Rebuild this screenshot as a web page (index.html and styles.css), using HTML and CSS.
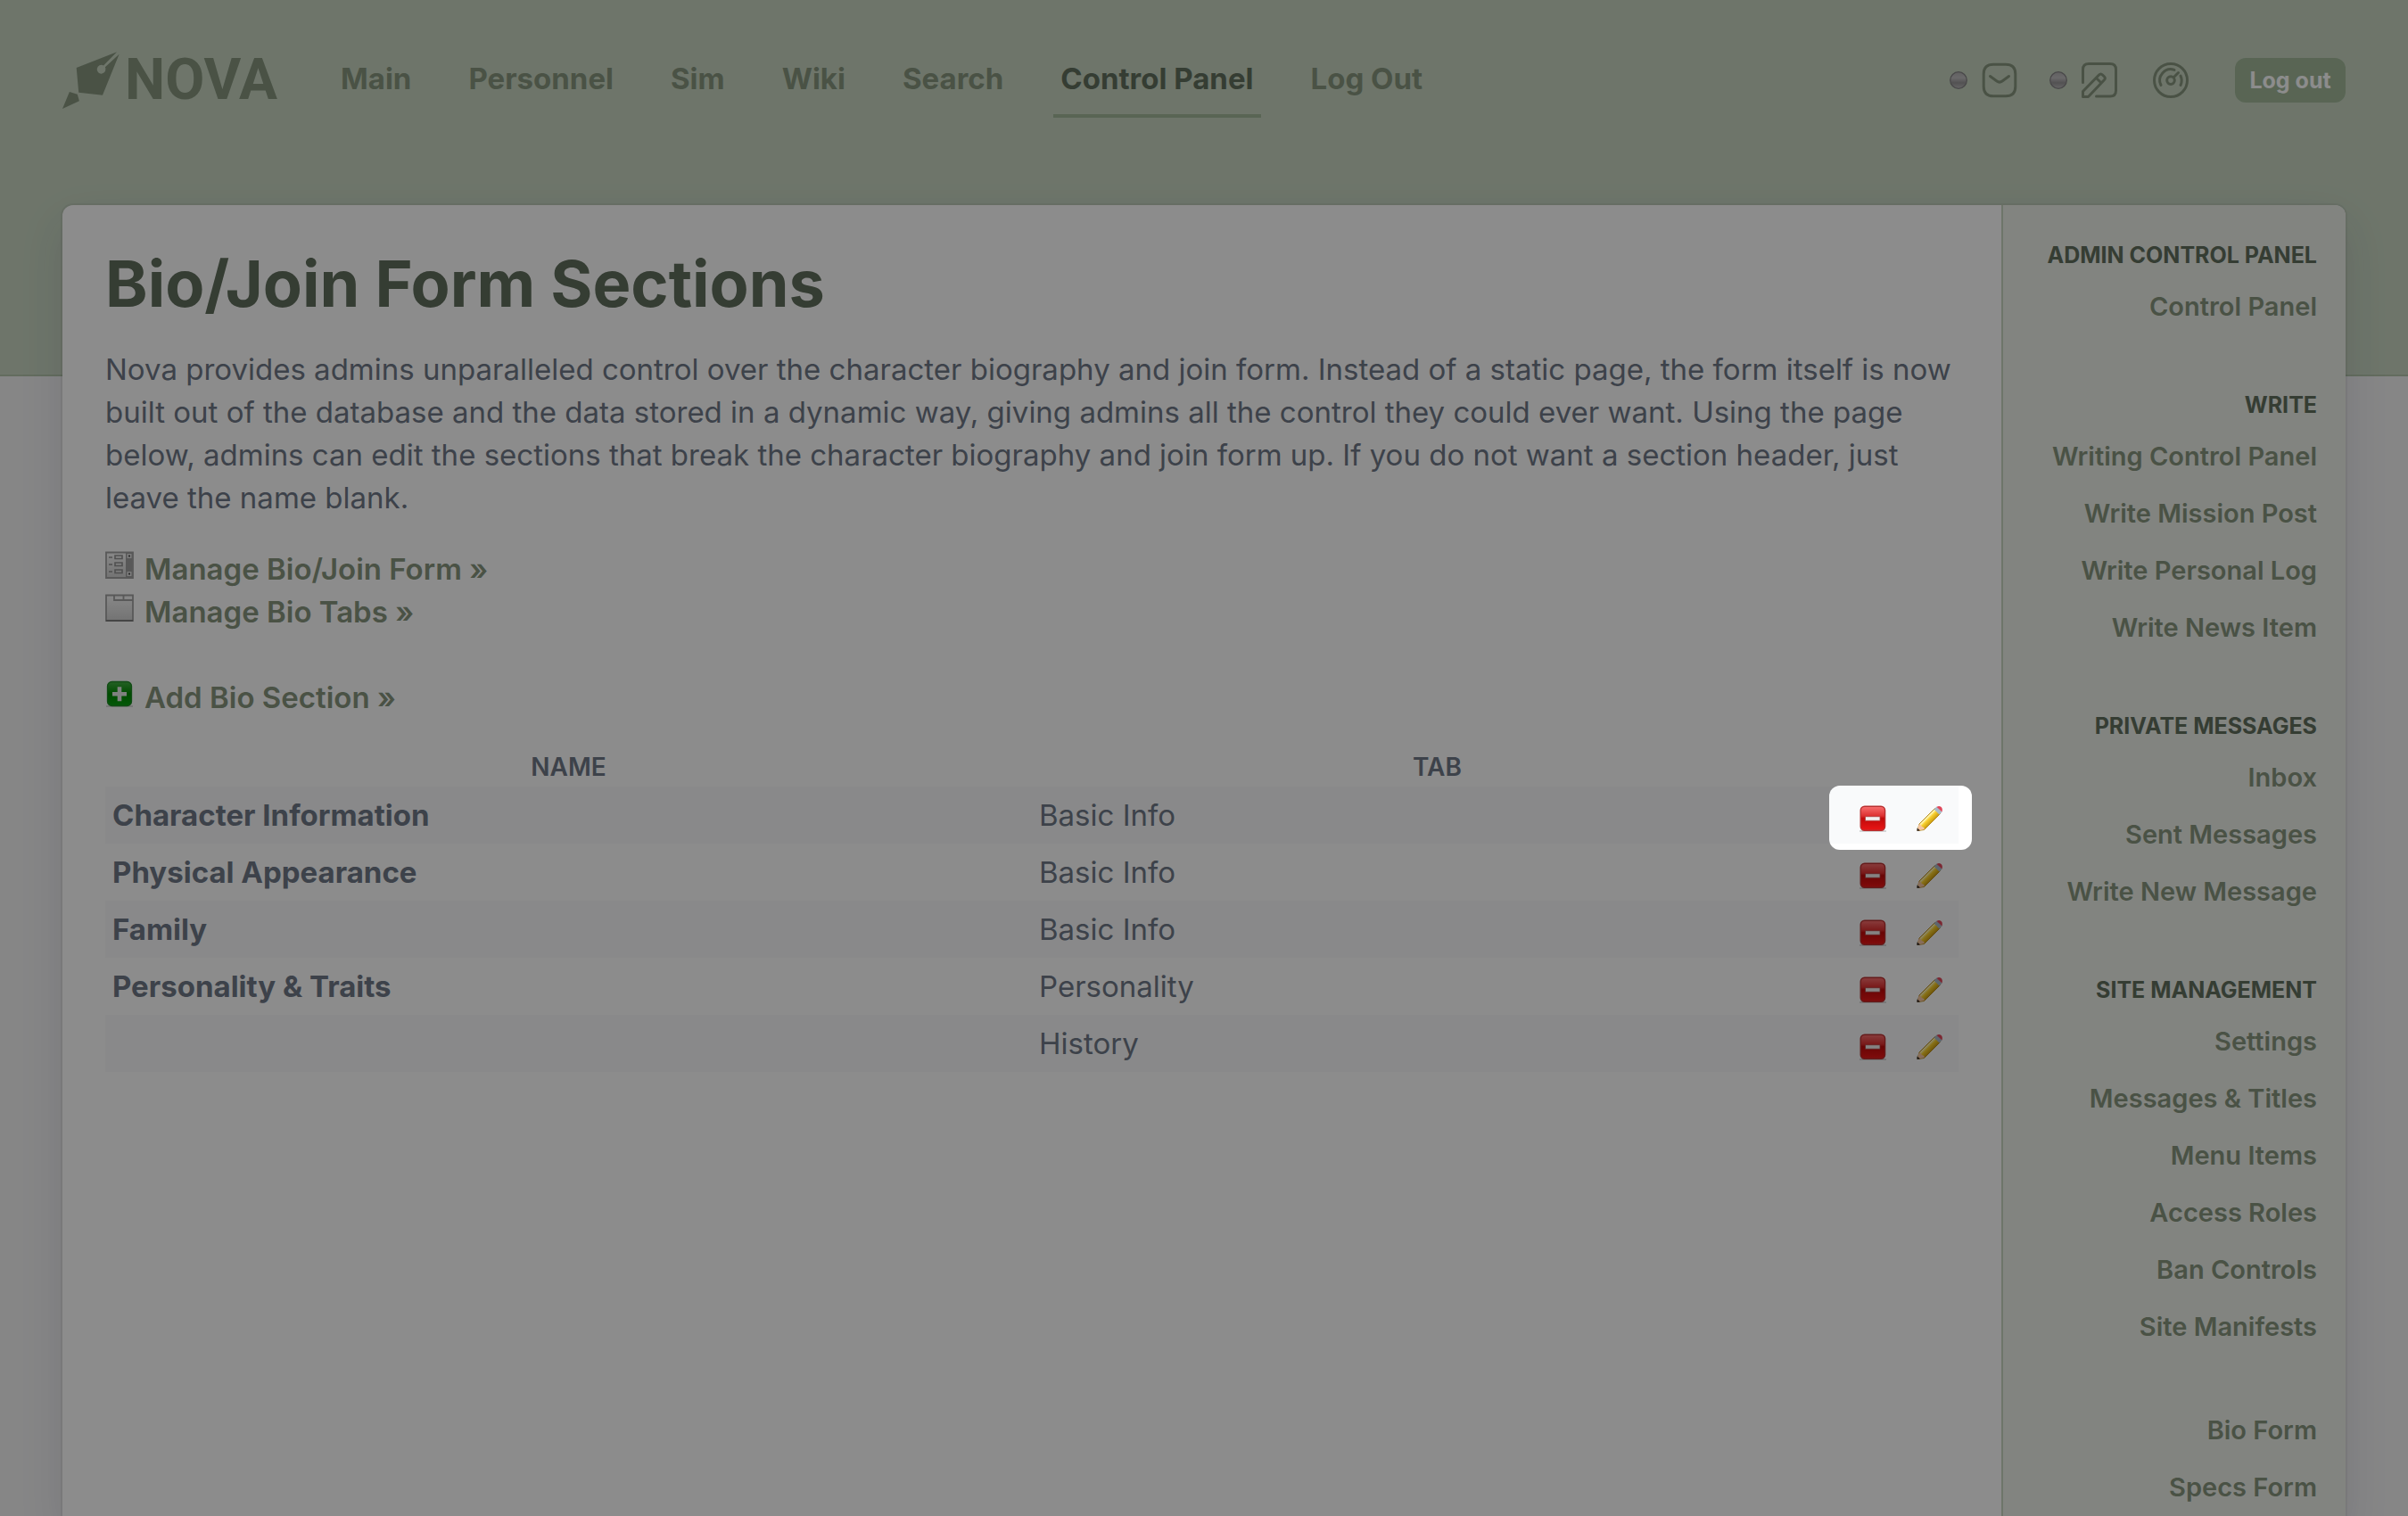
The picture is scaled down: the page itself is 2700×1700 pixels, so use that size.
FILE: index.html
```html
<!DOCTYPE html>
<html lang="en">
<head>
<meta charset="utf-8">
<meta name="viewport" content="width=device-width, initial-scale=1">
<title>Bio/Join Form Sections</title>
<link rel="stylesheet" href="styles.css">
</head>
<body>
<svg class="defs" aria-hidden="true">
  <defs>
    <linearGradient id="red" x1="0" y1="0" x2="0" y2="1"><stop offset="0" stop-color="#f87070"/><stop offset=".4" stop-color="#dd3030"/><stop offset=".5" stop-color="#c00a0a"/><stop offset="1" stop-color="#ea1616"/></linearGradient>
    <linearGradient id="green" x1="0" y1="0" x2="0" y2="1"><stop offset="0" stop-color="#45b045"/><stop offset=".5" stop-color="#008a00"/><stop offset="1" stop-color="#08a010"/></linearGradient>
    <linearGradient id="grey" x1="0" y1="0" x2="0" y2="1"><stop offset="0" stop-color="#f8f8f8"/><stop offset="1" stop-color="#d2d2d2"/></linearGradient>
    <linearGradient id="yellow" gradientUnits="userSpaceOnUse" x1="10" y1="10" x2="20" y2="20"><stop offset="0" stop-color="#f4d860"/><stop offset=".35" stop-color="#fff3a8"/><stop offset=".5" stop-color="#f8d030"/><stop offset="1" stop-color="#b88500"/></linearGradient>
    <linearGradient id="ball" x1="0" y1="0" x2="0" y2="1"><stop offset="0" stop-color="#b0aeb0"/><stop offset=".35" stop-color="#c2c0c2"/><stop offset=".65" stop-color="#989698"/><stop offset="1" stop-color="#bab8ba"/></linearGradient>
    <symbol id="remove" viewBox="0 0 32 32">
      <path d="M1 28h30v2H1z" fill="#000" opacity=".14"/>
      <rect x="2.200" y="1.200" width="27.400" height="27" rx="4.500" fill="url(#red)" stroke="#b83030" stroke-width="1.400"/>
      <path d="M7.500 12.700h16.500v4.600H7.500z" fill="#f2efef" stroke="#b04040" stroke-width=".8"/>
    </symbol>
    <symbol id="pencil" viewBox="0 0 32 32">
      <path d="M2 28.500L4 21 21.500 3.500 27.500 9.500 9.500 27.500Z" fill="url(#yellow)" stroke="#b48a24" stroke-width="1"/>
      <path d="M2 28.500L3.500 21.500 5.500 22 7 24 9.300 25 9.800 27Z" fill="#f6c6a4"/>
      <path d="M1.500 29V25.500L5 28.200Z" fill="#2c2220"/>
      <path d="M20.500 4.500L23.500 1.500 29.500 7.500 26.500 10.500Z" fill="#a9bac8"/>
      <path d="M23.500 2Q26 0 28.300 1.700T29.500 7.500Z" fill="#e0475a"/>
    </symbol>
    <symbol id="dot" viewBox="0 0 20 20">
      <circle cx="10" cy="10" r="9.300" fill="url(#ball)" stroke="#858385" stroke-width="1.300"/>
    </symbol>
  </defs>
</svg>

<header class="topbar">
  <a class="logo" href="#" aria-label="Nova home">
    <svg class="logo-mark" viewBox="0 0 64 64" aria-hidden="true">
      <path fill="currentColor" d="M61 .3L15.700 18 18.200 45.700 45 48.700 63.600 2.700 47.900 17.350A4.900 4.900 0 1 1 46.060 15.500Z"/>
      <path fill="currentColor" d="M7.900 45L16.800 47.700 18.900 55.300 0 64Z"/>
    </svg>
    <span class="logo-word">NOVA</span>
  </a>
  <nav class="menu" aria-label="Main menu">
    <a href="#">Main</a>
    <a href="#">Personnel</a>
    <a href="#">Sim</a>
    <a href="#">Wiki</a>
    <a href="#">Search</a>
    <a class="active" href="#" aria-current="page">Control Panel</a>
    <a href="#">Log Out</a>
  </nav>
  <div class="tools">
    <a class="tool" href="#" aria-label="Inbox">
      <svg class="dot" aria-hidden="true"><use href="#dot"/></svg>
      <svg class="glyph" viewBox="0 0 40 40" aria-hidden="true"><path d="M13 2.200H27Q37.800 2.200 37.800 13V27Q37.800 37.800 27 37.800H13Q2.200 37.800 2.200 27V13Q2.200 2.200 13 2.200ZM9.500 15.500L17 21Q20 23.200 23 21L30.500 15.500"/></svg>
    </a>
    <a class="tool" href="#" aria-label="Writing">
      <svg class="dot" aria-hidden="true"><use href="#dot"/></svg>
      <svg class="glyph" viewBox="0 0 40 40" aria-hidden="true"><path d="M1.500 22.500V8Q1.500 1.500 8 1.500H32Q38.500 1.500 38.500 8V31.500Q38.500 38 32 38H16.500M1.500 38.500V32.500L19.500 14Q21.500 12 23.500 14L25.300 15.800Q27.300 17.800 25.300 19.800L7.500 38.500ZM16.500 17.500L21.800 22.800"/></svg>
    </a>
    <a class="tool gauge" href="#" aria-label="Control panel">
      <svg class="glyph" viewBox="0 0 40 40" aria-hidden="true"><path d="M20 1.500A18.500 18.500 0 1 1 20 38.500 18.500 18.500 0 1 1 20 1.500ZM20 15.800A4.300 4.300 0 1 1 20 24.400 4.300 4.300 0 1 1 20 15.800ZM23.200 16.800L28.500 11.500M9 25.500A12.300 12.300 0 0 1 24 8.400M31 15A12.300 12.300 0 0 1 31 25.500"/></svg>
    </a>
    <button class="logout" type="button">Log out</button>
  </div>
</header>

<div class="card">
  <main class="content">
    <h1>Bio/Join Form Sections</h1>
    <p class="intro">Nova provides admins unparalleled control over the character biography and join form. Instead of a static page, the form itself is now built out of the database and the data stored in a dynamic way, giving admins all the control they could ever want. Using the page below, admins can edit the sections that break the character biography and join form up. If you do not want a section header, just leave the name blank.</p>
    <ul class="actions">
      <li><a href="#">
        <svg viewBox="0 0 32 32" aria-hidden="true"><path d="M1 1.500H31V30H1Z" fill="url(#grey)" stroke="#a2a2a2" stroke-width="1.800"/><path d="M23 2h7.500v28H23z" fill="#a0a0a0"/><path d="M24.500 3h5v5h-5zM24.500 23h5v5h-5z" fill="#e4e4e4"/><path d="M26 4.500h2v2h-2zM26 24.500h2v2h-2z" fill="#555"/><path d="M4 7h4M4 15h4M4 23h4M11 5h8v3.500h-8zM11 13h8v3.500h-8zM11 21h8v3.500h-8z" fill="none" stroke="#939393" stroke-width="1.600"/></svg>
        Manage Bio/Join Form »</a></li>
      <li><a href="#">
        <svg viewBox="0 0 32 32" aria-hidden="true"><path d="M1 1.500H31V30H1Z" fill="url(#grey)" stroke="#a2a2a2" stroke-width="1.800"/><path d="M10 1.500V7H31M20.500 1.500V7" fill="none" stroke="#a2a2a2" stroke-width="1.800"/><path d="M1 30H31" stroke="#777" stroke-width="1.600"/></svg>
        Manage Bio Tabs »</a></li>
      <li class="add"><a href="#">
        <svg viewBox="0 0 32 32" aria-hidden="true"><path d="M1 29h30v2H1z" fill="#000" opacity=".14"/><rect x="2.500" y="2.500" width="27" height="27" rx="5" fill="url(#green)" stroke="#228a28" stroke-width="1.300"/><path d="M16 8.200V24.200M8 16.200H24" stroke="#e8ece8" stroke-width="4.600"/></svg>
        Add Bio Section »</a></li>
    </ul>
    <table class="sections">
      <thead>
        <tr><th class="col-name" scope="col">NAME</th><th scope="col">TAB</th><td class="col-tools"></td></tr>
      </thead>
      <tbody>
        <tr>
          <th scope="row">Character Information</th><td>Basic Info</td>
          <td class="spot-cell"><span class="row-tools"><a href="#" aria-label="Delete Character Information"><svg><use href="#remove"/></svg></a><a href="#" aria-label="Edit Character Information"><svg><use href="#pencil"/></svg></a></span><span class="spotlight"></span></td>
        </tr>
        <tr>
          <th scope="row">Physical Appearance</th><td>Basic Info</td>
          <td><span class="row-tools"><a href="#" aria-label="Delete Physical Appearance"><svg><use href="#remove"/></svg></a><a href="#" aria-label="Edit Physical Appearance"><svg><use href="#pencil"/></svg></a></span></td>
        </tr>
        <tr>
          <th scope="row">Family</th><td>Basic Info</td>
          <td><span class="row-tools"><a href="#" aria-label="Delete Family"><svg><use href="#remove"/></svg></a><a href="#" aria-label="Edit Family"><svg><use href="#pencil"/></svg></a></span></td>
        </tr>
        <tr>
          <th scope="row">Personality &amp; Traits</th><td>Personality</td>
          <td><span class="row-tools"><a href="#" aria-label="Delete Personality and Traits"><svg><use href="#remove"/></svg></a><a href="#" aria-label="Edit Personality and Traits"><svg><use href="#pencil"/></svg></a></span></td>
        </tr>
        <tr>
          <th scope="row"></th><td>History</td>
          <td><span class="row-tools"><a href="#" aria-label="Delete History section"><svg><use href="#remove"/></svg></a><a href="#" aria-label="Edit History section"><svg><use href="#pencil"/></svg></a></span></td>
        </tr>
      </tbody>
    </table>
  </main>
  <aside class="sidebar">
    <section>
      <h2>ADMIN CONTROL PANEL</h2>
      <ul><li><a href="#">Control Panel</a></li></ul>
    </section>
    <section>
      <h2>WRITE</h2>
      <ul>
        <li><a href="#">Writing Control Panel</a></li>
        <li><a href="#">Write Mission Post</a></li>
        <li><a href="#">Write Personal Log</a></li>
        <li><a href="#">Write News Item</a></li>
      </ul>
    </section>
    <section>
      <h2>PRIVATE MESSAGES</h2>
      <ul>
        <li><a href="#">Inbox</a></li>
        <li><a href="#">Sent Messages</a></li>
        <li><a href="#">Write New Message</a></li>
      </ul>
    </section>
    <section>
      <h2>SITE MANAGEMENT</h2>
      <ul>
        <li><a href="#">Settings</a></li>
        <li><a href="#">Messages &amp; Titles</a></li>
        <li><a href="#">Menu Items</a></li>
        <li><a href="#">Access Roles</a></li>
        <li><a href="#">Ban Controls</a></li>
        <li><a href="#">Site Manifests</a></li>
      </ul>
      <ul class="more">
        <li><a href="#">Bio Form</a></li>
        <li><a href="#">Specs Form</a></li>
      </ul>
    </section>
  </aside>
</div>
</body>
</html>
```
FILE: styles.css
```css
:root {
  --brand: #87967f;
  --brand-dark: #626f5e;
  --brand-mid: #a2b99a;
  --header: #c8d6c2;
  --text: #6f7888;
}

* { box-sizing: border-box; }

body {
  margin: 0;
  min-height: 100vh;
  display: flex;
  flex-direction: column;
  overflow-x: hidden;
  font-family: Inter, "Liberation Sans", sans-serif;
  font-size: 33px;
  line-height: 48px;
  color: var(--text);
  background: linear-gradient(var(--header) 420px, #b4c5ab 420px, #b4c5ab 422px, #f4f4f5 422px) no-repeat #f4f4f5;
}

a { color: var(--brand); text-decoration: none; }
ul { list-style: none; margin: 0; padding: 0; }
h1, h2, p { margin: 0; }
.defs { position: absolute; width: 0; height: 0; }

/* Header */
.topbar {
  display: flex;
  align-items: center;
  height: 180px;
  margin-bottom: 50px;
  padding: 0 70px;
}

.logo { display: flex; flex: none; align-items: center; gap: 6px; width: 304px; color: var(--brand); }
.logo-mark { width: 64px; height: 64px; }
.logo-word { font: 700 64px/64px Roboto, sans-serif; }

.menu { display: flex; gap: 48px; }
.menu a {
  padding: 16px 8px;
  border-bottom: 4px solid transparent;
  font-weight: 700;
}
.menu .active { color: var(--brand-dark); border-bottom-color: var(--brand-mid); }

.tools { display: flex; align-items: center; gap: 36px; margin-left: auto; }
.tool { display: flex; align-items: center; gap: 16px; }
.gauge { margin-left: 4px; }
.dot { width: 20px; height: 20px; }
.glyph {
  width: 40px;
  height: 40px;
  fill: none;
  stroke: var(--brand);
  stroke-width: 3;
  stroke-linejoin: round;
  stroke-linecap: round;
}
.logout {
  width: 124px;
  height: 50px;
  margin-left: 16px;
  padding: 0;
  border: 0;
  border-radius: 12px;
  background: var(--brand-mid);
  color: #fff;
  font: 700 25px/32px Inter, "Liberation Sans", sans-serif;
}

/* Card */
.card {
  flex: 1;
  display: grid;
  grid-template-columns: 1fr 386px;
  margin: 0 70px;
  border-radius: 12px 12px 0 0;
  background: #fff;
  box-shadow: 0 0 0 2px rgba(0, 0, 0, .05), 0 20px 50px rgba(40, 40, 80, .12);
}
.content { padding: 48px; }

h1 {
  font-size: 72px;
  line-height: 80px;
  font-weight: 700;
  color: var(--brand-dark);
}
.intro { margin-top: 32px; }

.actions { margin-top: 32px; font-weight: 600; }
.actions a { display: flex; gap: 12px; }
.actions svg { width: 32px; height: 32px; margin-top: 4px; }
.actions .add { margin-top: 48px; }

.sections {
  width: 100%;
  margin-top: 32px;
  border-collapse: collapse;
  table-layout: fixed;
}
.sections th, .sections td { height: 64px; padding: 0 8px; text-align: left; }
.sections thead th, .sections thead td {
  height: 44px;
  font-size: 28px;
  line-height: 44px;
  font-weight: 600;
  text-align: center;
}
.col-name { width: 50%; }
.sections .col-tools { width: 130px; }
.sections tbody th { font-weight: 700; }
.sections tbody tr:nth-child(odd) { background: #f9fafb; }
.row-tools { display: flex; justify-content: flex-end; gap: 32px; padding: 10px 8px 0 0; }
.row-tools a { display: block; height: 32px; }
.row-tools svg { display: block; width: 32px; height: 32px; }

/* Highlight that dims everything around the row controls */
.spot-cell { position: relative; }
.spotlight {
  position: absolute;
  inset: -1px -15px -7px -15px;
  border-radius: 12px;
  box-shadow: 0 0 0 4000px rgba(0, 0, 0, .45);
  pointer-events: none;
  z-index: 10;
}

/* Sidebar */
.sidebar {
  padding: 40px 32px 0;
  border-left: 2px solid #c8d6c2;
  border-radius: 0 12px 0 0;
  background: #edf0ea;
  text-align: right;
}
.sidebar section + section { margin-top: 56px; }
.sidebar h2 {
  font-size: 25px;
  line-height: 32px;
  font-weight: 700;
  color: var(--brand-dark);
}
.sidebar ul { padding-top: 16px; }
.sidebar li { height: 64px; font-size: 29px; line-height: 36px; padding: 8px 0; font-weight: 600; }
.sidebar .more { padding-top: 52px; }
```
